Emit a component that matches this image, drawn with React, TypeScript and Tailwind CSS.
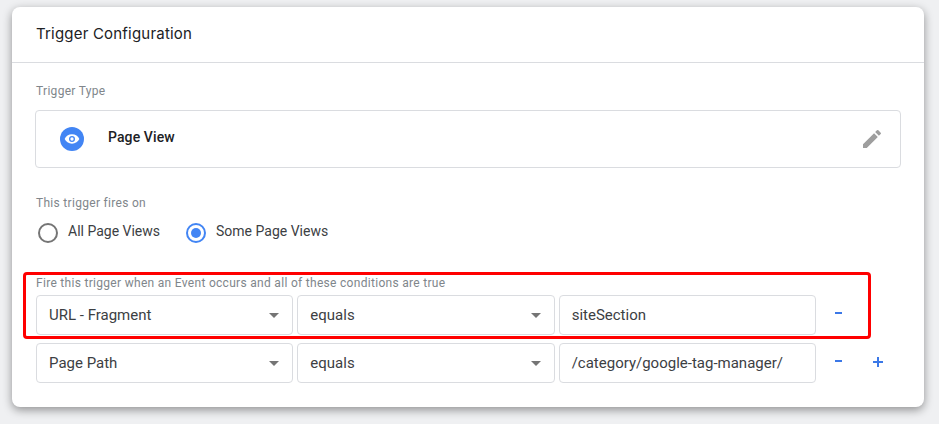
const roboto = "[font-family:Roboto,'Liberation_Sans',sans-serif]";

function Caret() {
  return (
    <svg width="10" height="5" viewBox="0 0 10 5" className="shrink-0">
      <path d="M0 0h10L5 5z" fill="#757575" />
    </svg>
  );
}

function Select({ label }: { label: string }) {
  return (
    <div className="flex h-10 items-center justify-between rounded border border-[#dadce0] pl-3 pr-[13px]">
      <span className="text-[15px] text-[#3c4043]">{label}</span>
      <Caret />
    </div>
  );
}

function Radio({ checked, label }: { checked?: boolean; label: string }) {
  return (
    <div className="flex items-center gap-[10px]">
      <span
        className={
          checked
            ? "flex h-5 w-5 items-center justify-center rounded-full border-2 border-[#4285f4]"
            : "flex h-5 w-5 items-center justify-center rounded-full border-2 border-[#757575]"
        }
      >
        {checked && <span className="h-[10px] w-[10px] rounded-full bg-[#4285f4]" />}
      </span>
      <span className="relative -top-[1px] text-[14px] text-[#3c4043]">{label}</span>
    </div>
  );
}

function Row({ a, c, plus }: { a: string; c: string; plus?: boolean }) {
  return (
    <div className="flex items-center">
      <div className="grid w-[780px] grid-cols-3 gap-1">
        <Select label={a} />
        <Select label="equals" />
        <div className="flex h-10 items-center rounded border border-[#dadce0] pl-3">
          <span className="text-[15px] text-[#3c4043]">{c}</span>
        </div>
      </div>
      <span className="mb-[4px] ml-[18px] flex w-[8px] justify-center">
        <span className="h-[2px] w-[7px] bg-[#3b78e7]" />
      </span>
      {plus && (
        <svg width="10" height="10" viewBox="0 0 10 10" className="mb-[3px] ml-[31px]">
          <path d="M4 0h2v4h4v2H6v4H4V6H0V4h4z" fill="#3b78e7" />
        </svg>
      )}
    </div>
  );
}

export default function App() {
  return (
    <div className={`h-[424px] w-[939px] overflow-hidden bg-[#eff0f2] pl-3 pt-[7px] ${roboto}`}>
      <div className="relative h-[400px] w-[912px] rounded-lg bg-white shadow-[0_3px_10px_rgba(0,0,0,0.4)]">
        <div className="flex h-[56px] items-center border-b border-[#dadce0] pl-6 [font-family:Inter,sans-serif] text-[15px] tracking-[0.2px] text-[#202124]">
          Trigger Configuration
        </div>
        <div className="px-6">
          <div className="mt-[21px] text-[12px] leading-[14px] tracking-[0.3px] text-[#80868b]">Trigger Type</div>
          <div className="mt-3 flex h-[58px] w-[866px] -translate-x-px items-center rounded border border-[#dadce0] pl-6 pr-4">
            <span className="flex h-6 w-6 items-center justify-center rounded-full bg-[#4285f4]">
              <svg width="16" height="16" viewBox="0 0 24 24">
                <path
                  fill="#fff"
                  d="M12 5C7 5 2.7 8.1 1 12c1.7 3.9 6 7 11 7s9.3-3.1 11-7c-1.7-3.9-6-7-11-7zm0 11.5a4.5 4.5 0 1 1 0-9 4.5 4.5 0 0 1 0 9zm0-7a2.5 2.5 0 1 0 0 5 2.5 2.5 0 0 0 0-5z"
                />
              </svg>
            </span>
            <span className="relative -top-[2px] ml-[24px] text-[14px] tracking-[0.1px] font-medium text-[#202124]">Page View</span>
            <svg width="24" height="24" viewBox="0 0 24 24" className="ml-auto">
              <path
                fill="#9e9e9e"
                d="M3 17.25V21h3.75L17.81 9.94l-3.75-3.75L3 17.25zM20.71 7.04a1 1 0 0 0 0-1.41l-2.34-2.34a1 1 0 0 0-1.41 0l-1.83 1.83 3.75 3.75 1.83-1.83z"
              />
            </svg>
          </div>
          <div className="mt-[28px] text-[12px] leading-[14px] tracking-[0.3px] text-[#80868b]">This trigger fires on</div>
          <div className="mt-[12px] flex gap-[26px] pl-[2px]">
            <Radio label="All Page Views" />
            <Radio checked label="Some Page Views" />
          </div>
          <div className="mt-[33px] text-[12px] leading-[14px] tracking-[0.3px] text-[#80868b]">
            Fire this trigger when an Event occurs and all of these conditions are true
          </div>
          <div className="mt-[5px] flex flex-col gap-2">
            <Row a="URL - Fragment" c="siteSection" />
            <Row a="Page Path" c="/category/google-tag-manager/" plus />
          </div>
        </div>
        <div className="pointer-events-none absolute left-[11px] top-[265px] h-[67px] w-[848px] rounded-[4px] border-[3px] border-[#ff0000]" />
      </div>
    </div>
  );
}
